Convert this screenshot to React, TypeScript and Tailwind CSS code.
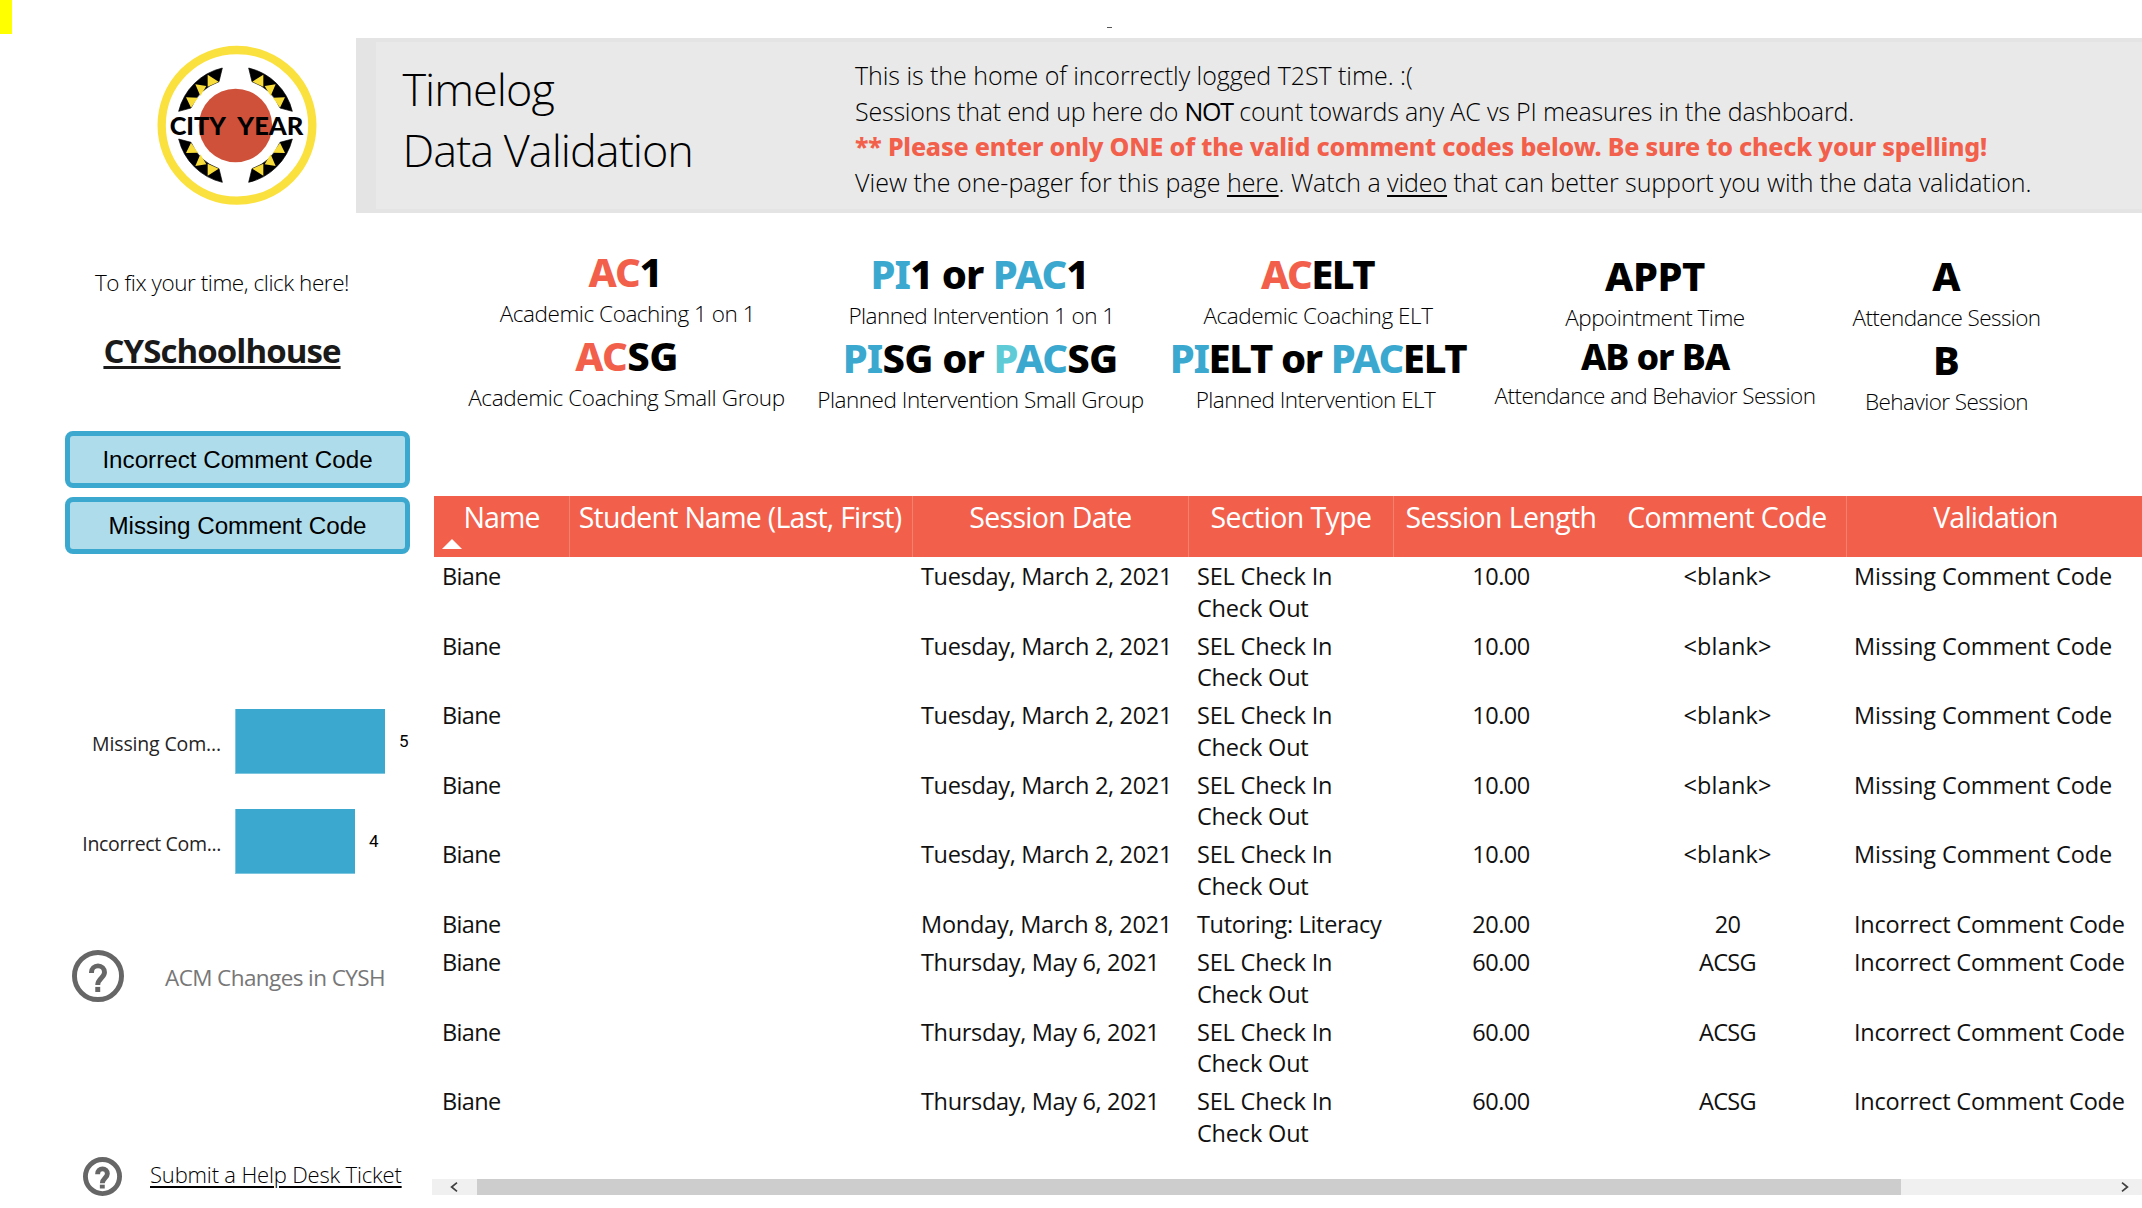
import type { ReactNode } from 'react';

const RED = 'text-[#f2604c]';
const BLUE = 'text-[#3ba9cf]';

function Logo() {
  const band = (
    <>
      <path d="M247 114A176 176 0 0 0 116 244L153 234A142 142 0 0 1 237 155Z" fill="#000" stroke="#000" strokeWidth="2" strokeLinejoin="round" />
      <path d="M203 134L236 155L203 170ZM166 163L199 168L181 198ZM138 202L174 203L153 233Z" fill="#f8dc3a" />
    </>
  );
  return (
    <svg viewBox="0 0 600 570" className="h-[190px] w-[200px]">
      <circle cx="291" cy="286" r="226" fill="#fff" stroke="#fbe13e" strokeWidth="25" />
      <circle cx="286.5" cy="286.5" r="110" fill="#cf5139" />
      <g>{band}</g>
      <g transform="translate(573 0) scale(-1 1)">{band}</g>
      <g transform="translate(0 571) scale(1 -1)">{band}</g>
      <g transform="translate(573 571) scale(-1 -1)">{band}</g>
      <g className="font-['Lato',sans-serif] text-[72px] font-black">
        <text x="89" y="314" textLength="169" lengthAdjust="spacingAndGlyphs">CITY</text>
        <text x="292" y="314" textLength="198" lengthAdjust="spacingAndGlyphs">YEAR</text>
      </g>
    </svg>
  );
}

function HelpIcon({ className, ring }: { className: string; ring: number }) {
  return (
    <svg viewBox="2 2 20 20" className={className} fill="none" stroke="#666">
      <circle cx="12" cy="12" r={10 - ring / 2} strokeWidth={ring} />
      <path d="M9.5 10.8v-.2a2.5 2.5 0 0 1 5 0c0 2.1-2.6 2.3-2.6 4.9" strokeWidth={ring} />
      <rect x={11.9 - ring / 2} y="16.2" width={ring} height="1.95" fill="#666" stroke="none" />
    </svg>
  );
}

function Code({ children, sub, className, subClass }: { children: ReactNode; sub: string; className: string; subClass: string }) {
  return (
    <div className="mb-[1.4px] flex flex-col items-center whitespace-nowrap text-black">
      <div className={`font-['Noto_Sans',sans-serif] font-extrabold ${className}`}>{children}</div>
      <div className={`text-[22.5px] leading-[35px] font-light ${subClass}`}>{sub}</div>
    </div>
  );
}

const BIG = 'text-[40px] leading-[48px]';

const missing = {
  date: 'Tuesday, March 2, 2021', dateClass: 'tracking-[-0.32px]',
  type: ['SEL Check In', 'Check Out'], typeClass: 'tracking-[-0.18px]',
  len: '10.00', code: '<blank>', codeClass: 'tracking-[0.16px]',
  val: 'Missing Comment Code', valClass: 'tracking-[-0.08px]',
};
const incorrect = {
  ...missing,
  date: 'Thursday, May 6, 2021', dateClass: 'tracking-[-0.33px]',
  len: '60.00', code: 'ACSG', codeClass: 'tracking-[-0.6px]',
  val: 'Incorrect Comment Code', valClass: 'tracking-[-0.22px]',
};
const rows = [
  missing, missing, missing, missing, missing,
  { ...incorrect, date: 'Monday, March 8, 2021', dateClass: 'tracking-[-0.24px]', type: ['Tutoring: Literacy'], typeClass: 'tracking-[-0.33px]', len: '20.00', code: '20' },
  incorrect, incorrect, incorrect,
];

const GRID = 'grid w-[1713px] grid-cols-[136px_343px_276px_205px_216px_237px_300px]';
const HEADS: [string, string][] = [
  ['Name', 'tracking-[-0.89px]'],
  ['Student Name (Last, First)', 'pr-[2px] tracking-[-0.75px]'],
  ['Session Date', 'tracking-[-0.7px]'],
  ['Section Type', 'tracking-[-0.6px]'],
  ['Session Length', 'pr-[2px] tracking-[-0.62px]'],
  ['Comment Code', 'pr-[2px] tracking-[-0.68px]'],
  ['Validation', 'pr-[3px] tracking-[-0.78px]'],
];

function Bar({ label, labelClass, value, barClass }: { label: string; labelClass: string; value: number; barClass: string }) {
  return (
    <div className="flex h-[65px] items-center">
      <div className={`w-[221px] pt-[4px] text-right text-[19.5px] whitespace-nowrap text-[#252423] ${labelClass}`}>{label}</div>
      <div className={`ml-[14px] h-full border-b border-l border-[#7cc6df] bg-[#3ba9cf] ${barClass}`} />
      <div className="ml-[14px] pt-px font-['Roboto',sans-serif] text-[17px] text-[#000]">{value}</div>
    </div>
  );
}

export default function App() {
  return (
    <div className="flex h-[1208px] w-[2142px] flex-col overflow-hidden bg-white font-['Open_Sans',sans-serif] text-black">
      <header className="flex h-[213px] shrink-0">
        <div className="h-[34px] w-[12px] bg-[#ffff00]" />
        <div className="w-[344px] pt-[30px] pl-[128px]"><Logo /></div>
        <div className="flex flex-1 flex-col">
          <div className="flex h-[38px] items-end pb-[10px] pl-[751px]"><div className="h-px w-[5px] bg-[#555]" /></div>
          <div className="flex h-[175px] border-y-4 border-l-[20px] border-[#e4e4e4] bg-[#e9e9e9] font-light whitespace-nowrap">
            <h1 className="w-[479px] pt-[17px] pl-[26.5px] text-[45px] leading-[60.5px] tracking-[-0.98px]">
              Timelog<br />Data Validation
            </h1>
            <div className="pt-[16px] text-[25px] leading-[35.7px]">
              <div className="tracking-[-0.05px]">This is the home of incorrectly logged T2ST time. :(</div>
              <div className="tracking-[-0.21px]">Sessions that end up here do <span className="font-medium tracking-[-1.2px]">NOT</span><span className="tracking-[-0.16px]"> count towards any AC vs PI measures in the dashboard.</span></div>
              <div className="font-['Noto_Sans',sans-serif] font-extrabold tracking-[-0.2px] text-[#f2604c]">** Please enter only ONE of the valid comment codes below. Be sure to check your spelling!</div>
              <div className="tracking-[-0.08px]">
                <span className="tracking-[0.04px]">View the one-pager for this page </span><a className="underline decoration-2 underline-offset-[3px]">here</a>. Watch a <a className="underline decoration-2 underline-offset-[3px]">video</a> that can better support you with the data validation.
              </div>
            </div>
          </div>
        </div>
      </header>

      <div className="flex flex-1">
        <aside className="flex w-[432px] shrink-0 flex-col">
          <div className="w-[444px] pt-[53px] text-center text-[22.5px] leading-[34px] font-light tracking-[-0.45px]">To fix your time, click here!</div>
          <div className="mt-[27px] w-[444px] text-center text-[33px] leading-[48px] font-bold tracking-[-0.92px] text-[#1a1a1a]">
            <a className="underline decoration-[3px] underline-offset-[3px]">CYSchoolhouse</a>
          </div>
          <div className="mt-[56px] ml-[65px] flex w-[345px] flex-col gap-[9px] font-['Liberation_Sans',sans-serif] text-[24.2px]">
            <button className="h-[57px] rounded-[8px] border-5 border-[#3ba9cf] bg-[#afdcea] pt-[2px]">Incorrect Comment Code</button>
            <button className="h-[57px] rounded-[8px] border-5 border-[#3ba9cf] bg-[#afdcea] pt-[2px]">Missing Comment Code</button>
          </div>
          <div className="mt-[155px] flex flex-col gap-[35px]">
            <Bar label="Missing Com..." labelClass="tracking-[-0.15px]" value={5} barClass="w-[150px]" />
            <Bar label="Incorrect Com..." labelClass="tracking-[-0.34px]" value={4} barClass="w-[120px]" />
          </div>
          <div className="mt-[76px] flex h-[52px] items-center pl-[72px]">
            <HelpIcon className="h-[52px] w-[52px]" ring={1.9} />
            <span className="ml-[41px] pt-[4px] text-[22.5px] tracking-[-0.59px] whitespace-nowrap text-[#777]">ACM Changes in CYSH</span>
          </div>
          <div className="mt-[155px] flex h-[39px] items-center pl-[83px]">
            <HelpIcon className="h-[39px] w-[39px]" ring={2.5} />
            <a className="ml-[28px] pb-[4px] text-[22px] font-light tracking-[-0.17px] whitespace-nowrap underline decoration-[1.5px] underline-offset-[3px]">Submit a Help Desk Ticket</a>
          </div>
        </aside>

        <main className="flex flex-1 flex-col overflow-hidden">
          <section className="flex h-[283px] shrink-0 pt-[35px] pl-[2px]">
            <div className="w-[385px]">
              <Code sub="Academic Coaching 1 on 1" subClass="pl-[2px] tracking-[-0.45px]" className={`${BIG} pr-[3px] tracking-[-1.16px]`}><span className={RED}>AC</span>1</Code>
              <Code sub="Academic Coaching Small Group" subClass="tracking-[-0.37px]" className={`${BIG} tracking-[-0.61px]`}><span className={RED}>AC</span>SG</Code>
            </div>
            <div className="w-[322px] pt-[2px]">
              <Code sub="Planned Intervention 1 on 1" subClass="pl-[3px] tracking-[-0.54px]" className={`${BIG} pr-px tracking-[-0.95px]`}><span className={BLUE}>PI</span>1 or <span className={BLUE}>PAC</span>1</Code>
              <Code sub="Planned Intervention Small Group" subClass="pl-px tracking-[-0.48px]" className={`${BIG} tracking-[-0.85px]`}><span className={BLUE}>PI</span>SG or <span className="text-[#5fcbd6]">P</span><span className={BLUE}>AC</span>SG</Code>
            </div>
            <div className="w-[354px] pt-[2px]">
              <Code sub="Academic Coaching ELT" subClass="tracking-[-0.43px]" className={`${BIG} pr-px tracking-[-1.6px]`}><span className={RED}>AC</span>ELT</Code>
              <Code sub="Planned Intervention ELT" subClass="pr-[5px] tracking-[-0.54px]" className={`${BIG} tracking-[-1.39px]`}><span className={BLUE}>PI</span>ELT or <span className={BLUE}>PAC</span>ELT</Code>
            </div>
            <div className="w-[320px] pt-[4px]">
              <Code sub="Appointment Time" subClass="tracking-[-0.5px]" className={`${BIG} tracking-[-0.47px]`}>APPT</Code>
              <Code sub="Attendance and Behavior Session" subClass="tracking-[-0.56px]" className="text-[36px] leading-[42px] tracking-[-1.1px]">AB or BA</Code>
            </div>
            <div className="w-[263px] pt-[4px]">
              <Code sub="Attendance Session" subClass="tracking-[-0.6px]" className={BIG}>A</Code>
              <Code sub="Behavior Session" subClass="tracking-[-0.56px]" className={BIG}>B</Code>
            </div>
          </section>

          <section className="ml-[2px] shrink-0 overflow-hidden">
            <div className={`${GRID} h-[61px] bg-[#f2604c] text-[28.5px] leading-[42px] text-white`}>
              {HEADS.map(([h, c], i) => (
                <div key={h} className={`text-center whitespace-nowrap ${c} ${i === 4 || i === 6 ? '' : 'border-r border-[#f5806f]'}`}>
                  {h}
                  {i === 0 && (
                    <svg viewBox="0 0 20 10" className="mt-[1px] ml-[8px] h-[10px] w-[20px]"><path d="M10 0L20 10H0Z" fill="#fff" /></svg>
                  )}
                </div>
              ))}
            </div>
            <div className="-mt-px text-[23.5px] leading-[31.7px] text-[#111]">
              {rows.map((r, i) => (
                <div key={i} className={`${GRID} pt-[5px] whitespace-nowrap ${i === 5 ? 'h-[38.2px]' : 'h-[69.6px]'}`}>
                  <div className="pl-[8px] tracking-[-0.65px]">Biane</div>
                  <div />
                  <div className={`pl-[8px] ${r.dateClass}`}>{r.date}</div>
                  <div className={`pl-[8px] ${r.typeClass}`}>{r.type.map((t) => <div key={t}>{t}</div>)}</div>
                  <div className="pr-[2px] text-center tracking-[-0.5px]">{r.len}</div>
                  <div className={`pr-[2px] text-center ${r.codeClass}`}>{r.code}</div>
                  <div className={`pl-[7px] ${r.valClass}`}>{r.val}</div>
                </div>
              ))}
            </div>
          </section>

          <div className="mt-[28px] flex h-[16px] shrink-0 items-center bg-[#f0f0f0]">
            <div className="flex w-[45px] justify-center">
              <svg viewBox="0 0 8 10" className="mr-px h-[10px] w-[8px]" fill="none" stroke="#404040" strokeWidth="1.7"><path d="M7 .7L1.6 5L7 9.3" /></svg>
            </div>
            <div className="h-full w-[1424px] bg-[#cdcdcd]" />
            <svg viewBox="0 0 8 10" className="ml-auto mr-[13px] h-[10px] w-[8px]" fill="none" stroke="#404040" strokeWidth="1.7"><path d="M1 .7L6.4 5L1 9.3" /></svg>
          </div>
        </main>
      </div>
    </div>
  );
}
